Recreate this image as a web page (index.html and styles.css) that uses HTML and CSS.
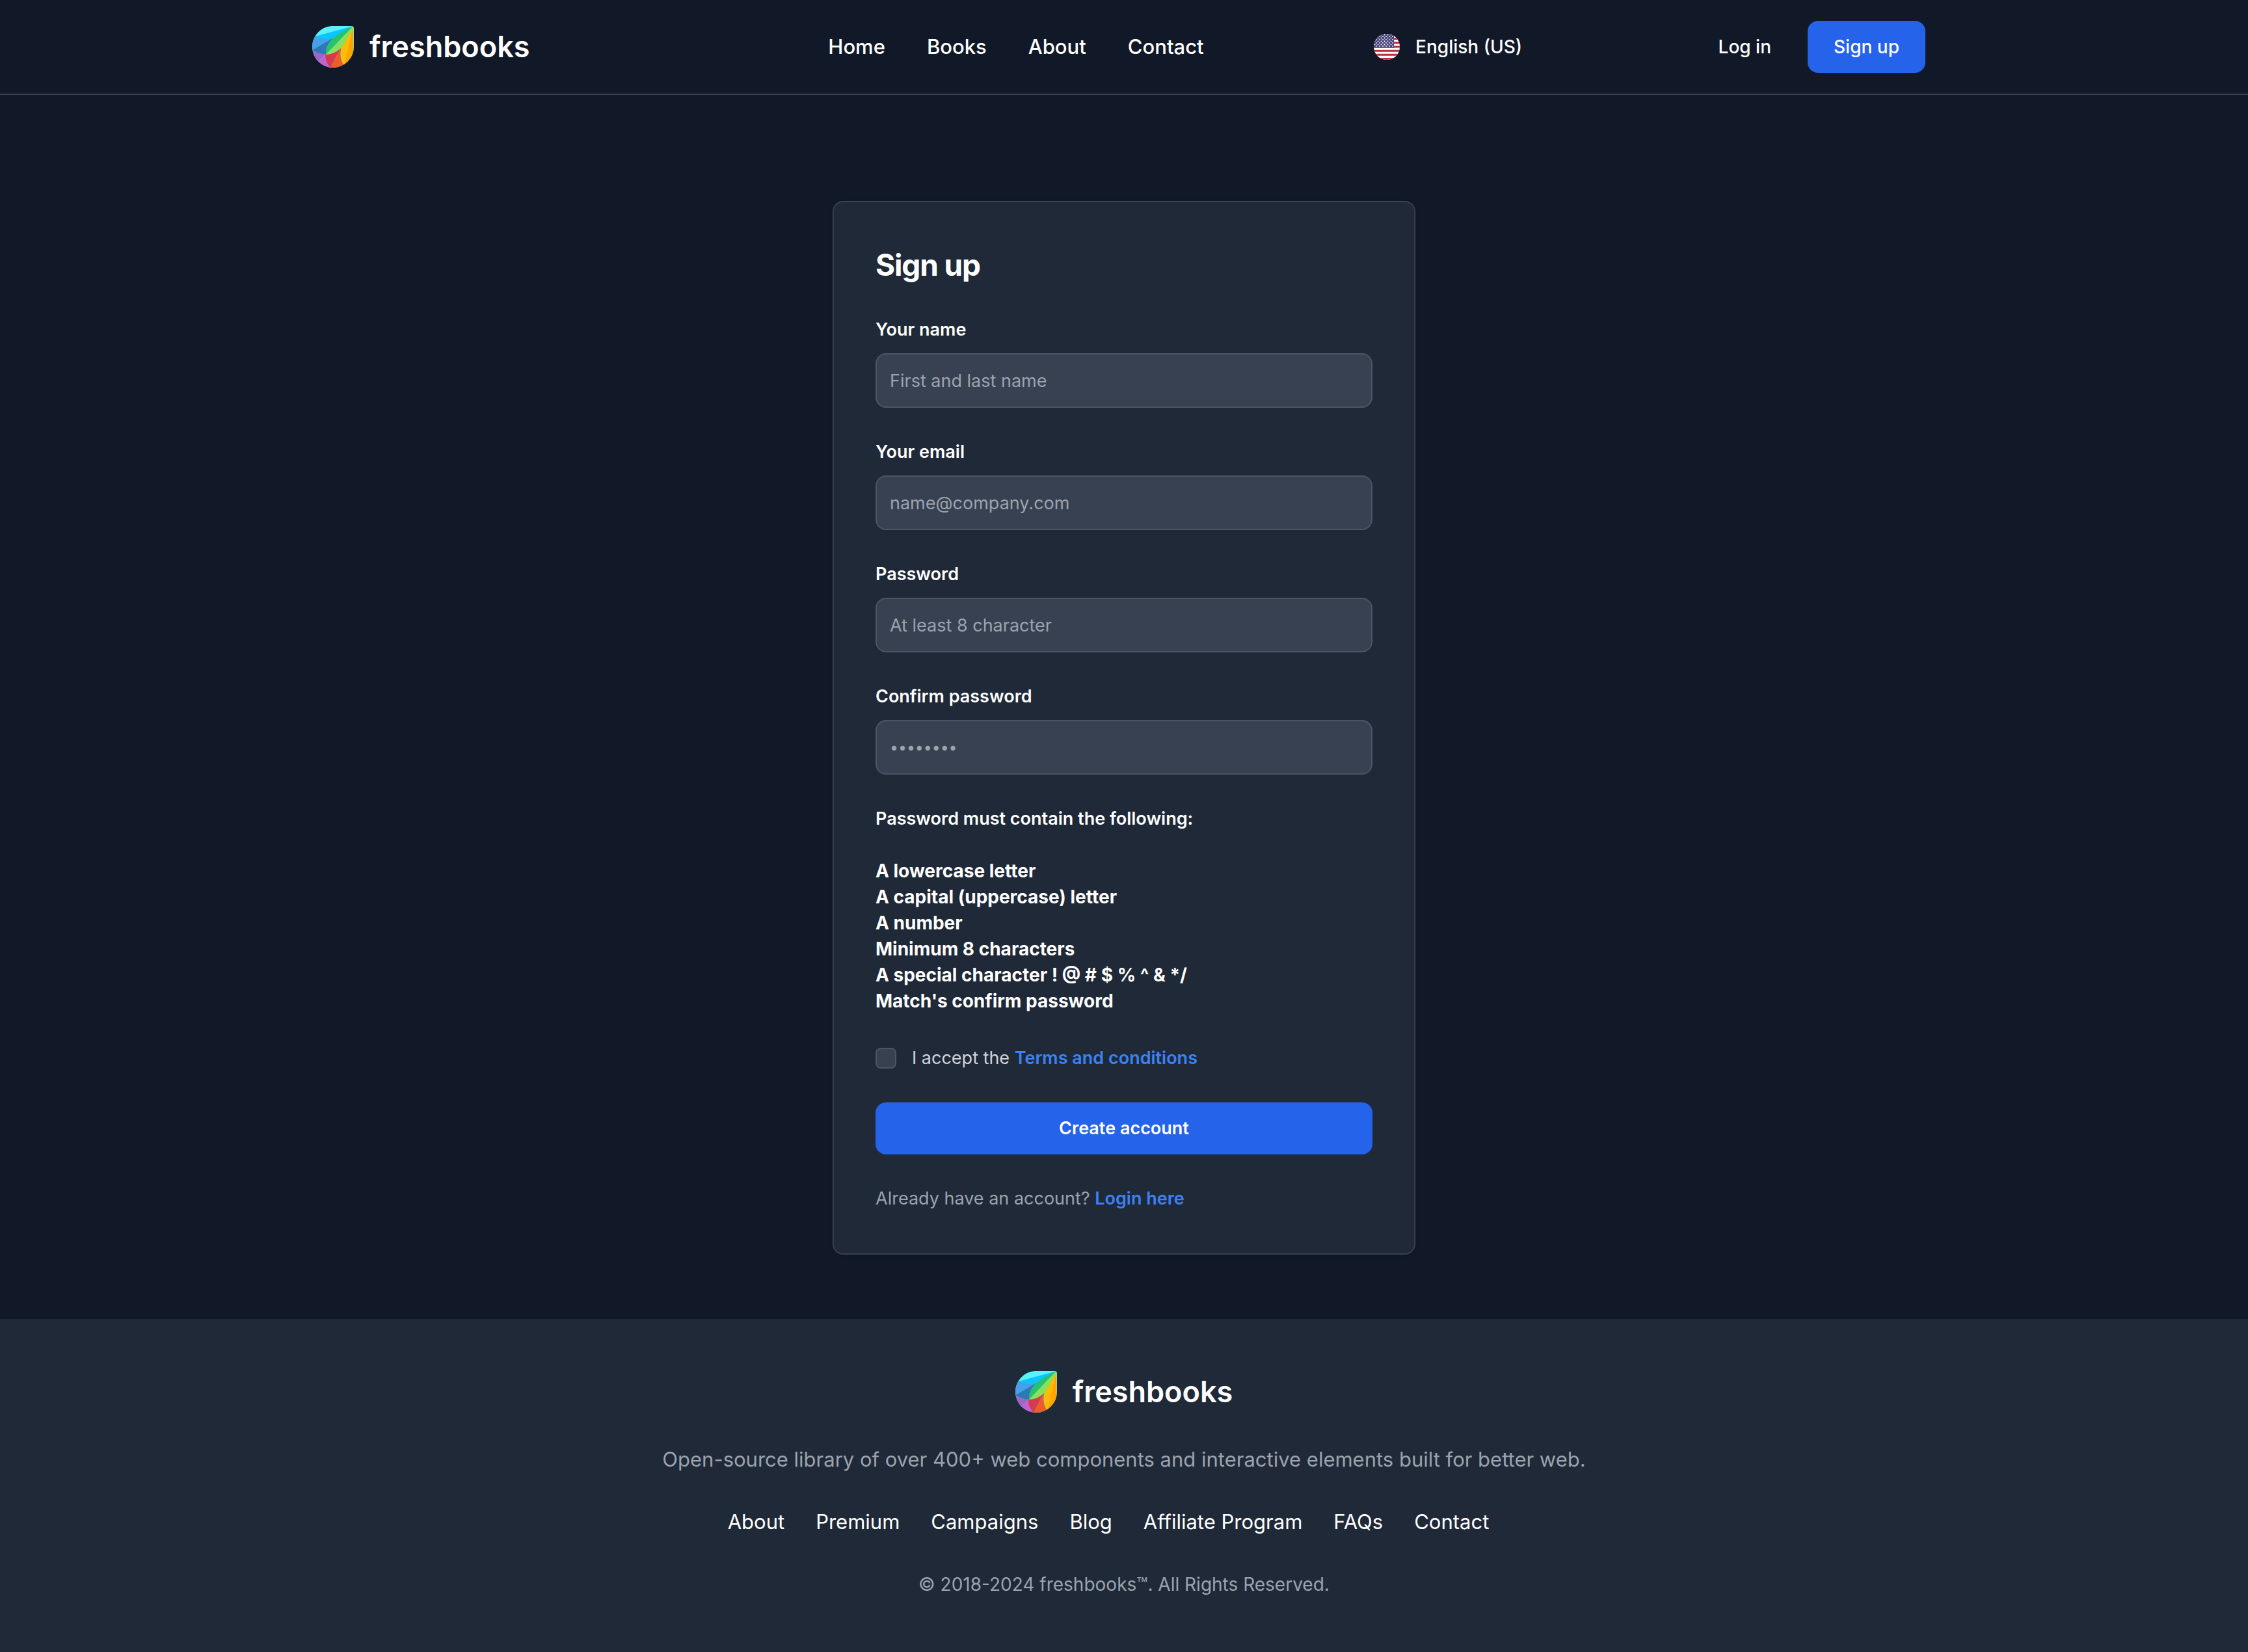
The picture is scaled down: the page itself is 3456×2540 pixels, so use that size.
FILE: index.html
```html
<!DOCTYPE html>
<html lang="en">
<head>
<meta charset="utf-8">
<meta name="viewport" content="width=device-width, initial-scale=1">
<title>Sign up - freshbooks</title>
<link rel="stylesheet" href="styles.css">
</head>
<body>
<svg class="sprite" aria-hidden="true">
  <defs>
    <clipPath id="leaf-clip"><path d="M30 0H60Q64 0 64 4V32A32 32 0 1 1 30 0Z"/></clipPath>
    <clipPath id="flag-clip"><circle cx="20" cy="20" r="20"/></clipPath>
    <pattern id="stars" width="5" height="5" patternUnits="userSpaceOnUse">
      <circle cx="1.5" cy="1.5" r=".9" fill="#fff"/><circle cx="4" cy="4" r=".9" fill="#fff"/>
    </pattern>
    <symbol id="leaf" viewBox="0 0 64 64">
      <g clip-path="url(#leaf-clip)">
        <rect width="64" height="64" fill="#5bf3fb"/>
        <path d="M64 0L4 16V24L30 24Z" fill="#0ac5ff"/>
        <path d="M0 15H4Q16 22 31 19L0 37Z" fill="#469fe9"/>
        <path d="M31 19L0 37Q10 44 21 44Z" fill="#3077b7"/>
        <path d="M0 37Q9 44 21 43L8 56L0 60Z" fill="#9c65c6"/>
        <path d="M21 43L6 58V64H32Z" fill="#c263cd"/>
        <path d="M20 43Q36 41 45 32L28 64Q20 56 20 43Z" fill="#d53a50"/>
        <path d="M45 32L28 64H52Q40 52 45 32Z" fill="#ee5d26"/>
        <path d="M64 0Q43 32 44 42Q44 52 50 64L64 0Z" fill="#ffbc00"/>
        <path d="M63 0L49 62L64 64Z" fill="#ffa400"/>
        <path d="M63 0Q34 14 27 24Q20 33 21 44Z" fill="#28c16d"/>
        <path d="M63 0L21 44Q36 43 45 33Q50 28 64 0Z" fill="#8cdf58"/>
      </g>
    </symbol>
  </defs>
</svg>

<header class="site-header">
  <nav class="bar" aria-label="Main">
    <a class="brand" href="#">
      <svg class="brand-mark" aria-hidden="true"><use href="#leaf"/></svg>
      <span>freshbooks</span>
    </a>
    <ul class="menu">
      <li><a href="#">Home</a></li>
      <li><a href="#">Books</a></li>
      <li><a href="#">About</a></li>
      <li><a href="#">Contact</a></li>
    </ul>
    <button class="language" type="button">
      <svg class="flag" viewBox="0 0 40 40" aria-hidden="true">
        <g clip-path="url(#flag-clip)">
          <rect width="40" height="40" fill="#fff"/>
          <path d="M0 1.5H40M0 7.7H40M0 13.9H40M0 20H40M0 26.2H40M0 32.3H40M0 38.5H40" stroke="#bd2c3f" stroke-width="3.1"/>
          <rect width="31" height="21.6" fill="#46437b"/>
          <rect width="30" height="20.5" fill="url(#stars)"/>
        </g>
      </svg>
      <span>English (US)</span>
    </button>
    <div class="account">
      <a class="login" href="#">Log in</a>
      <a class="button" href="#">Sign up</a>
    </div>
  </nav>
</header>

<main class="page">
  <section class="card">
    <h1>Sign up</h1>
    <form class="form">
      <div class="field">
        <label for="name">Your name</label>
        <input id="name" type="text" placeholder="First and last name">
      </div>
      <div class="field">
        <label for="email">Your email</label>
        <input id="email" type="email" placeholder="name@company.com">
      </div>
      <div class="field">
        <label for="password">Password</label>
        <input id="password" type="password" placeholder="At least 8 character">
      </div>
      <div class="field">
        <label for="confirm">Confirm password</label>
        <input id="confirm" class="dotted" type="password" placeholder="••••••••">
      </div>
      <div class="rules">
        <p>Password must contain the following:</p>
        <ul>
          <li>A lowercase letter</li>
          <li>A capital (uppercase) letter</li>
          <li>A number</li>
          <li>Minimum 8 characters</li>
          <li>A special character ! @ # $ % ^ &amp; */</li>
          <li>Match's confirm password</li>
        </ul>
      </div>
      <div class="terms">
        <input id="terms" type="checkbox">
        <label for="terms">I accept the <a href="#">Terms and conditions</a></label>
      </div>
      <button class="button" type="submit">Create account</button>
      <p class="have-account">Already have an account? <a href="#">Login here</a></p>
    </form>
  </section>
</main>

<footer class="site-footer">
  <a class="brand" href="#">
    <svg class="brand-mark" aria-hidden="true"><use href="#leaf"/></svg>
    <span>freshbooks</span>
  </a>
  <p class="tagline">Open-source library of over 400+ web components and interactive elements built for better web.</p>
  <ul class="footer-links">
    <li><a href="#">About</a></li>
    <li><a href="#">Premium</a></li>
    <li><a href="#">Campaigns</a></li>
    <li><a href="#">Blog</a></li>
    <li><a href="#">Affiliate Program</a></li>
    <li><a href="#">FAQs</a></li>
    <li><a href="#">Contact</a></li>
  </ul>
  <p class="copyright">© 2018-2024 freshbooks™. All Rights Reserved.</p>
</footer>
</body>
</html>
```

FILE: styles.css
```css
*,
*::before,
*::after {
  box-sizing: border-box;
}

body {
  margin: 0;
  background: #111827;
  color: #fff;
  font-family: Inter, "Liberation Sans", sans-serif;
  font-size: 27px;
  line-height: 40px;
}

h1,
p,
ul {
  margin: 0;
  padding: 0;
}

ul {
  list-style: none;
}

a {
  color: inherit;
  text-decoration: none;
}

button,
input {
  font: inherit;
  color: inherit;
}

.sprite {
  position: absolute;
  width: 0;
  height: 0;
}

/* Header */
.site-header {
  padding: 32px;
  border-bottom: 2px solid #374151;
}

.bar {
  display: flex;
  align-items: center;
  max-width: 2496px;
  margin: 0 auto;
  font-size: 28px;
  font-weight: 500;
}

.brand {
  display: flex;
  align-items: center;
  gap: 24px;
  font-size: 45px;
  font-weight: 600;
  line-height: 64px;
}

.brand-mark {
  width: 64px;
  height: 64px;
}

.menu {
  display: flex;
  gap: 64px;
  margin: 0 auto;
  font-size: 31px;
  line-height: 48px;
}

.bar .brand {
  margin-right: auto;
}

.language {
  display: flex;
  align-items: center;
  gap: 24px;
  margin-right: auto;
  padding: 16px 32px;
  border: 0;
  background: none;
}

.flag {
  width: 40px;
  height: 40px;
}

.account {
  display: flex;
  align-items: center;
  gap: 16px;
  padding-right: 16px;
}

.login {
  padding: 20px 40px;
}

.button {
  padding: 20px 40px;
  border: 0;
  border-radius: 16px;
  background: #2563eb;
  color: #fff;
  text-align: center;
}

/* Sign up card */
.page {
  display: flex;
  justify-content: center;
  padding: 163px 32px 99px;
}

.card {
  display: flex;
  flex-direction: column;
  gap: 48px;
  width: 100%;
  max-width: 896px;
  padding: 64px;
  border: 2px solid #374151;
  border-radius: 16px;
  background: #1f2937;
  box-shadow: 0 2px 6px rgb(0 0 0 / 10%);
}

h1 {
  font-size: 46px;
  font-weight: 700;
  line-height: 64px;
  letter-spacing: -0.025em;
}

.form {
  display: flex;
  flex-direction: column;
  gap: 48px;
}

.form .button {
  font-weight: 600;
}

.field {
  display: flex;
  flex-direction: column;
  gap: 16px;
  font-weight: 600;
}

.field input {
  width: 100%;
  height: 84px;
  padding: 20px;
  border: 2px solid #4b5563;
  border-radius: 16px;
  background: #374151;
  font-weight: 400;
  line-height: 40px;
}

.field input::placeholder {
  color: #9ca3af;
  opacity: 1;
}

.field .dotted {
  font-size: 23px;
}

.rules {
  display: flex;
  flex-direction: column;
  gap: 40px;
  font-weight: 600;
}

.rules ul {
  font-size: 28px;
  font-weight: 700;
}

.terms {
  display: flex;
  align-items: center;
  gap: 24px;
  color: #d1d5db;
}

.terms input {
  appearance: none;
  width: 32px;
  height: 32px;
  margin: 0;
  border: 2px solid #4b5563;
  border-radius: 8px;
  background: #374151;
}

.terms a,
.have-account a {
  color: #3b82f6;
  font-weight: 600;
}

.have-account {
  color: #9ca3af;
}

/* Footer */
.site-footer {
  display: flex;
  flex-direction: column;
  align-items: center;
  gap: 48px;
  padding: 80px 32px;
  background: #1f2937;
  color: #9ca3af;
  font-size: 31px;
  line-height: 48px;
}

.site-footer .brand,
.footer-links {
  color: #fff;
}

.footer-links {
  display: flex;
  flex-wrap: wrap;
}

.footer-links li {
  margin-right: 48px;
}

.copyright {
  font-size: 28px;
}
```
